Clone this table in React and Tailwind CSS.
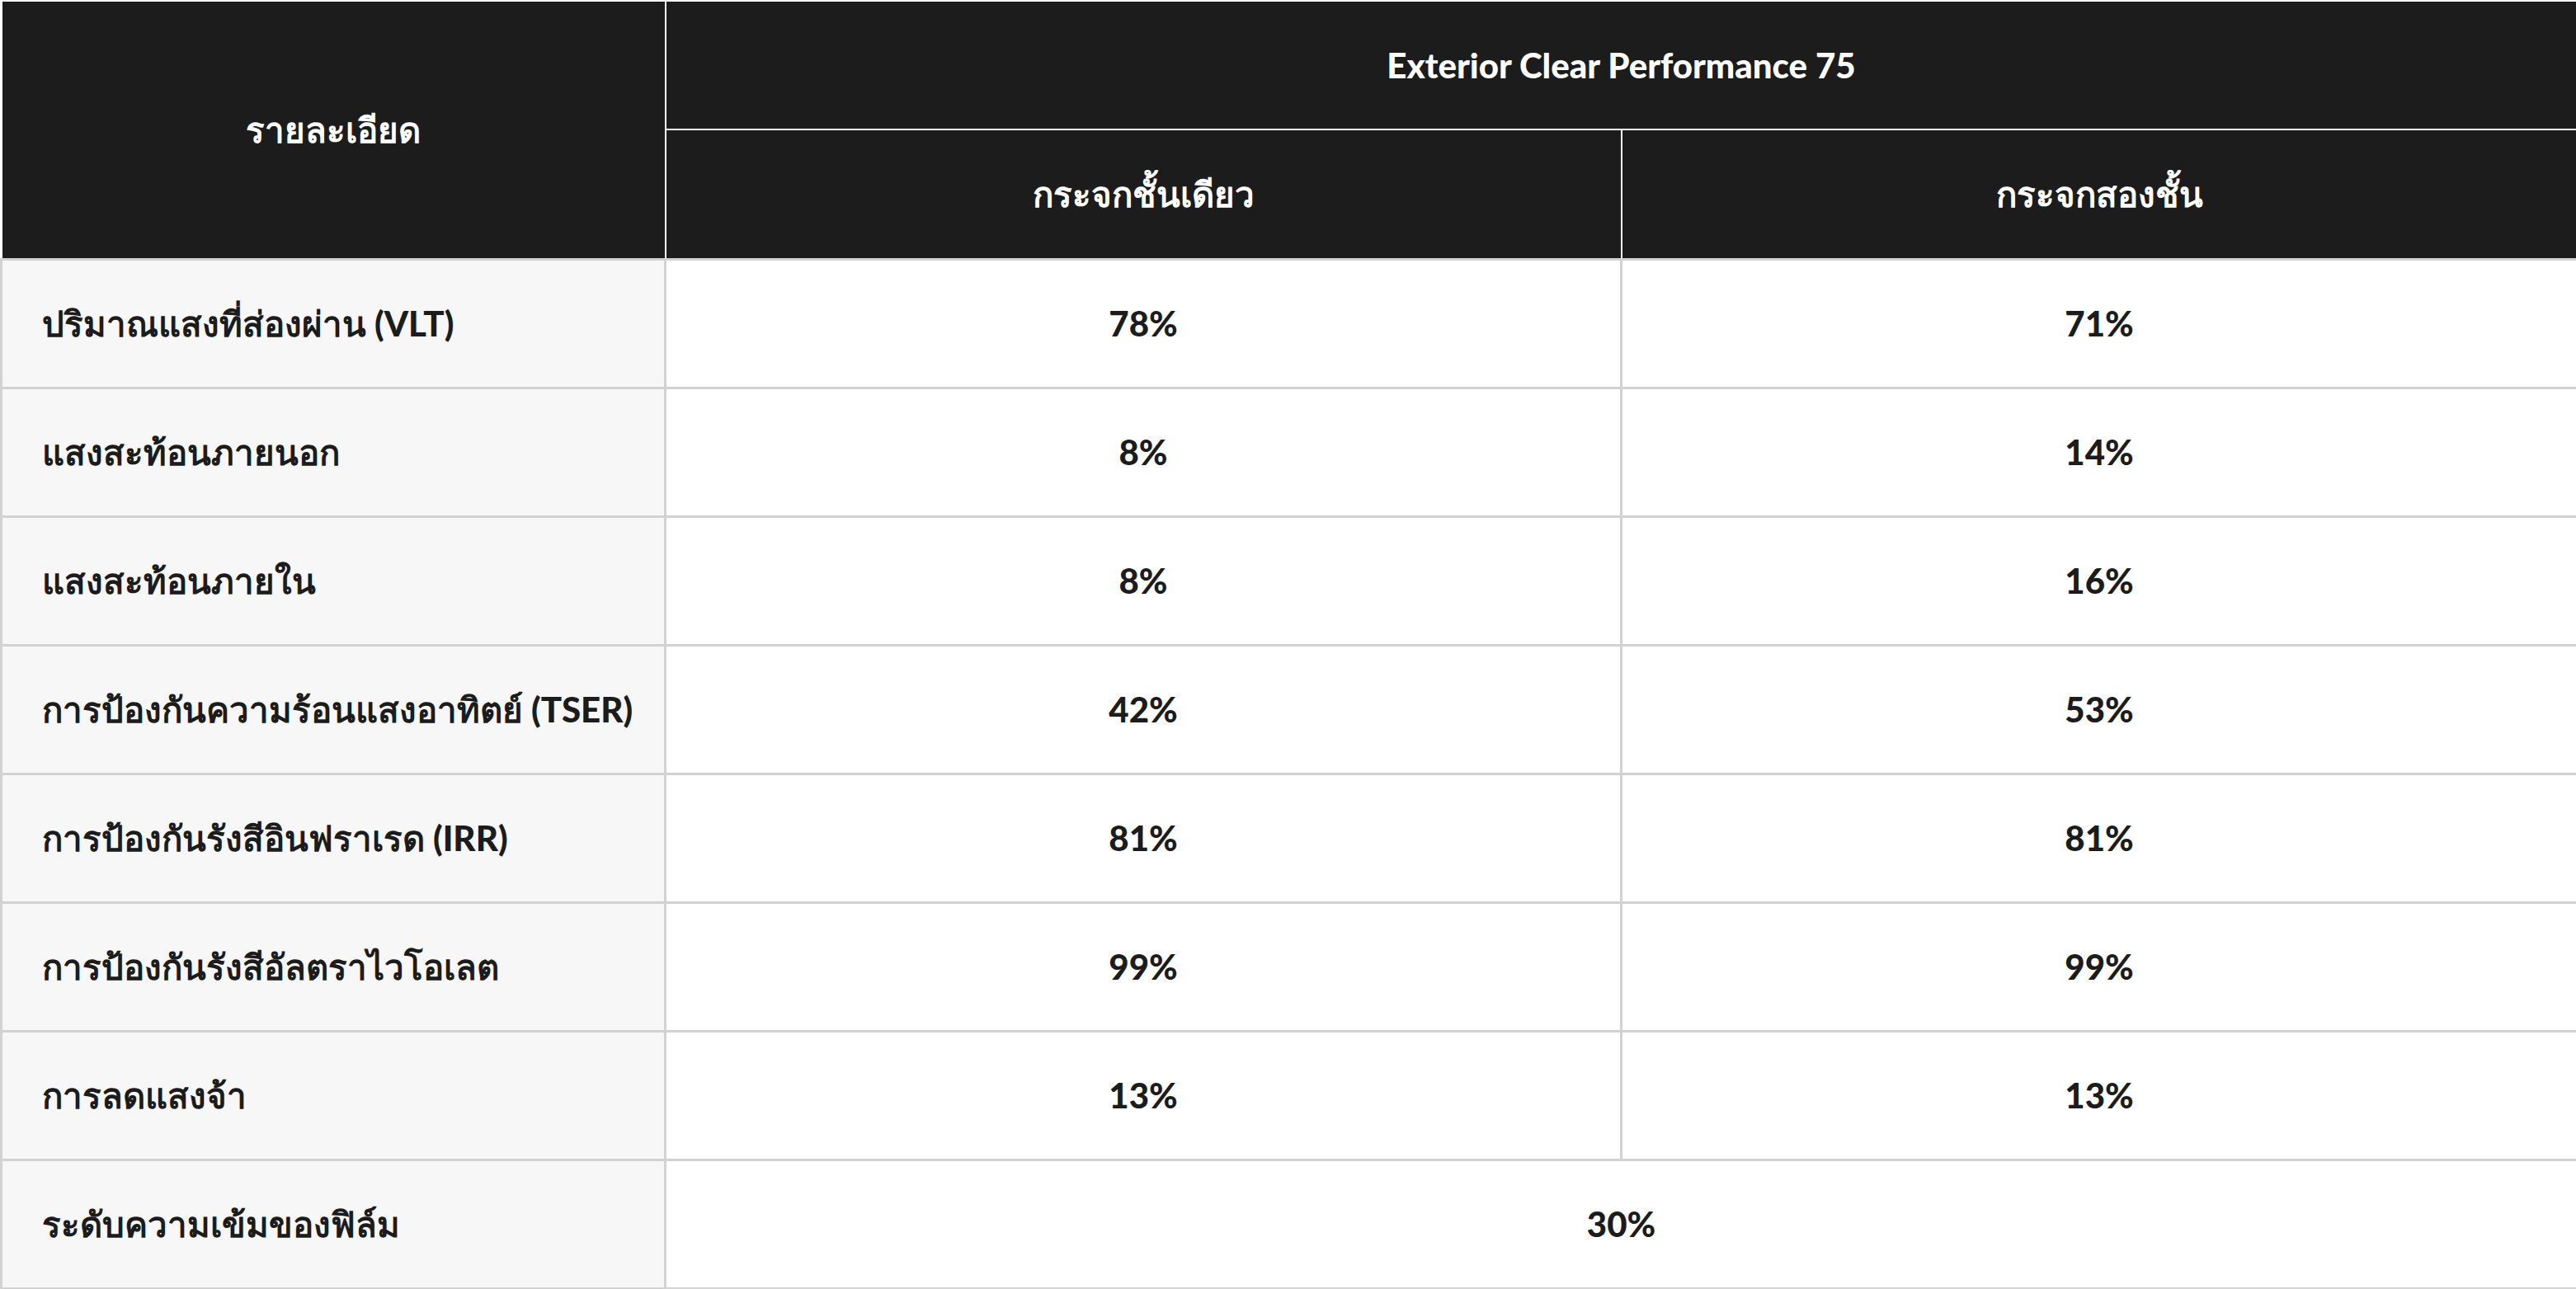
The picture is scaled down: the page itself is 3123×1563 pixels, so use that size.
const rows = [
  { label: 'ปริมาณแสงที่ส่องผ่าน (VLT)', single: '78%', double: '71%' },
  { label: 'แสงสะท้อนภายนอก', single: '8%', double: '14%' },
  { label: 'แสงสะท้อนภายใน', single: '8%', double: '16%' },
  { label: 'การป้องกันความร้อนแสงอาทิตย์ (TSER)', single: '42%', double: '53%' },
  { label: 'การป้องกันรังสีอินฟราเรด (IRR)', single: '81%', double: '81%' },
  { label: 'การป้องกันรังสีอัลตราไวโอเลต', single: '99%', double: '99%' },
  { label: 'การลดแสงจ้า', single: '13%', double: '13%' },
];

const headCell = 'bg-[#1c1c1c] text-white text-[42px] font-black border-2 border-white text-center align-middle';
const labelCell = 'bg-[#f7f7f7] border-[3px] border-[#d2d2d2] pl-[48px] text-[42px] font-black align-middle';
const valueCell = 'bg-white border-[3px] border-[#d2d2d2] text-center text-[42px] font-black align-middle';

export default function App() {
  return (
    <div
      className="w-[3123px] h-[1563px] bg-white text-[#1c1c1c]"
      style={{ fontFamily: '"Lato", "Noto Sans", "DejaVu Sans", sans-serif' }}
    >
      <table className="w-full table-fixed border-collapse">
        <colgroup>
          <col className="w-[805px]" />
          <col className="w-[1159px]" />
          <col className="w-[1159px]" />
        </colgroup>
        <thead>
          <tr className="h-[156px]">
            <th rowSpan={2} className={headCell}>
              รายละเอียด
            </th>
            <th colSpan={2} className={headCell}>
              Exterior Clear Performance 75
            </th>
          </tr>
          <tr className="h-[157px]">
            <th className={headCell}>กระจกชั้นเดียว</th>
            <th className={headCell}>กระจกสองชั้น</th>
          </tr>
        </thead>
        <tbody>
          {rows.map((r) => (
            <tr key={r.label} className="h-[156px]">
              <td className={labelCell}>{r.label}</td>
              <td className={valueCell}>{r.single}</td>
              <td className={valueCell}>{r.double}</td>
            </tr>
          ))}
          <tr className="h-[156px]">
            <td className={labelCell}>ระดับความเข้มของฟิล์ม</td>
            <td colSpan={2} className={valueCell}>
              30%
            </td>
          </tr>
        </tbody>
      </table>
    </div>
  );
}
